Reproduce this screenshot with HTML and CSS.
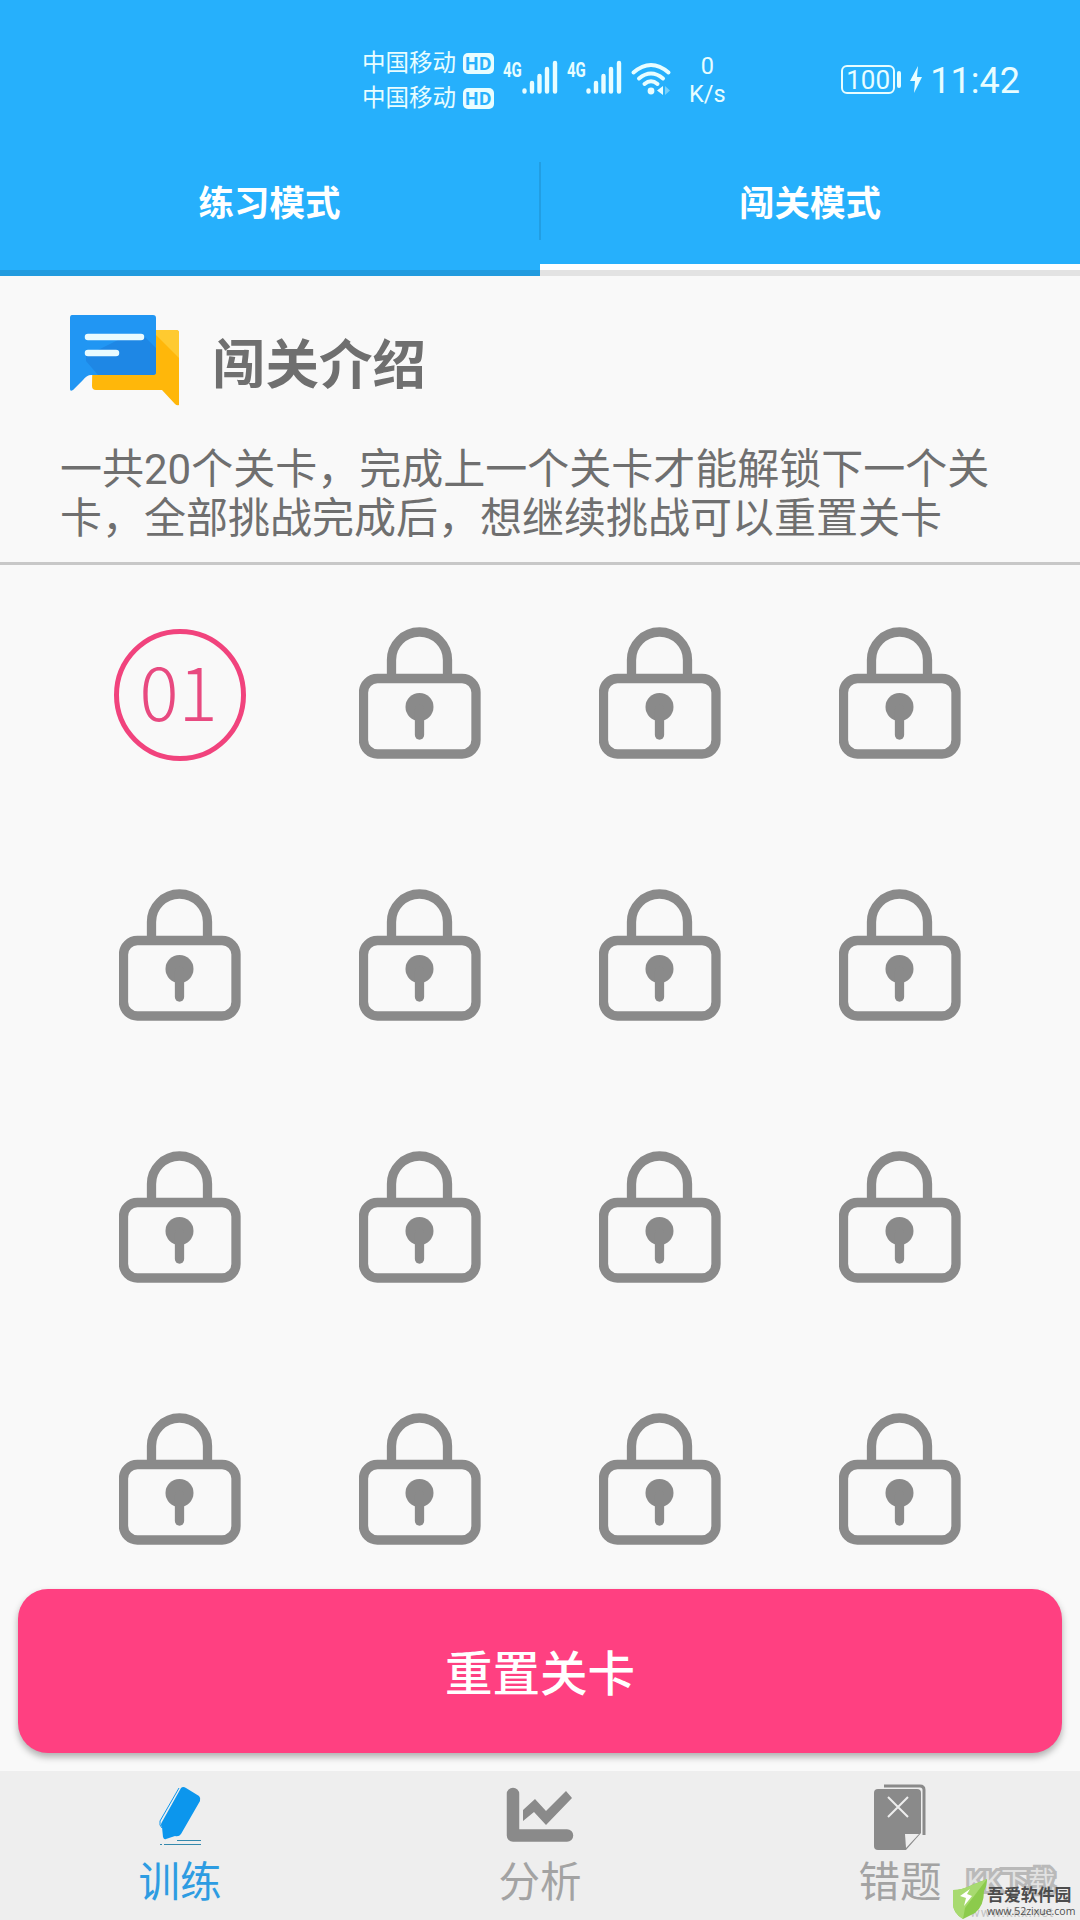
FILE: index.html
```
<!DOCTYPE html>
<html lang="zh-CN">
<head>
    <meta charset="UTF-8">
    <meta name="viewport" content="width=device-width, initial-scale=1.0">
    <title>闯关模式</title>
    <link rel="stylesheet" href="styles.css">
</head>
<body>
    <svg class="defs" width="0" height="0">
        <symbol id="lock" viewBox="0 0 122 132">
            <path d="M32.500 49V33a28 28 0 0 1 56 0V49" fill="none" stroke="#8a8a8a" stroke-width="9.300"/>
            <rect x="4.500" y="51.500" width="112.500" height="75.500" rx="14" fill="none" stroke="#8a8a8a" stroke-width="9.300"/>
            <circle cx="60.500" cy="80" r="14" fill="#8a8a8a"/>
            <path d="M60.500 82V108" stroke="#8a8a8a" stroke-width="9.300" stroke-linecap="round"/>
        </symbol>
        <symbol id="signal" viewBox="0 0 36 34">
            <path d="M2.500 30.500V31.500M10 23V31.500M17.500 16V31.500M25 9V31.500M33 3V31.500" stroke="#e8fdff" stroke-width="4.400" stroke-linecap="round"/>
        </symbol>
    </svg>

    <header class="header">
        <div class="status-bar">
            <div class="carriers">
                <div class="carrier">中国移动<span class="hd">HD</span></div>
                <div class="carrier">中国移动<span class="hd">HD</span></div>
            </div>
            <div class="signal first">
                <span>4G</span>
                <svg width="36" height="34"><use href="#signal"/></svg>
            </div>
            <div class="signal">
                <span>4G</span>
                <svg width="36" height="34"><use href="#signal"/></svg>
            </div>
            <svg class="wifi" width="40" height="34" viewBox="0 0 40 34">
                <g fill="none" stroke="#e8fdff" stroke-width="4" stroke-linecap="round">
                    <path d="M2.500 10.500Q20-4.500 37.500 10.500"/>
                    <path d="M8 16.500Q20 6.500 32 16.500"/>
                    <path d="M13.500 22Q20 16.500 26.500 22"/>
                </g>
                <circle cx="20" cy="29" r="3.400" fill="#e8fdff"/>
                <path d="M26 28.500L32 24V33Z" fill="#e8fdff"/>
                <path d="M34 24L39 28.500L34 33Z" fill="#77cffa"/>
            </svg>
            <div class="speed">0<br>K/s</div>
            <div class="battery">100</div>
            <div class="battery-tip"></div>
            <svg class="bolt" width="14" height="28" viewBox="0 0 14 28">
                <path d="M9 0L1 15H6L5 27L13 11H8Z" fill="#e8fdff"/>
            </svg>
            <div class="clock">11:42</div>
        </div>
        <nav class="tabs">
            <div class="tab">练习模式</div>
            <div class="tab-divider"></div>
            <div class="tab active">闯关模式</div>
        </nav>
    </header>

    <section class="intro">
        <div class="intro-title">
            <svg width="112" height="92" viewBox="0 0 112 92">
                <path d="M24 15H107Q110 15 110 18V90Q108 91 106 89L93 75H27Q23 75 23 71Z" fill="#ffb70a"/>
                <path d="M84 15H107Q110 15 110 18V43L84 17Z" fill="#ffca30"/>
                <path d="M3 0H84Q87 0 87 3V57Q87 60 84 60H22Q18 60 14 65L4 75Q1 77 1 74V3Q1 0 3 0Z" fill="#2196f3"/>
                <path d="M75 21L87 33V57Q87 60 84 60H29L17 46L17 41L49 25Z" fill="#1e87e5"/>
                <path d="M19 22H72M19 38H47" stroke="#e9fbff" stroke-width="6.500" stroke-linecap="round"/>
            </svg>
            <h1>闯关介绍</h1>
        </div>
        <p>一共20个关卡，完成上一个关卡才能解锁下一个关<br>卡，全部挑战完成后，想继续挑战可以重置关卡</p>
    </section>

    <main class="levels">
        <div class="level"><div class="number">01</div></div>
        <div class="level"><svg class="lock"><use href="#lock"/></svg></div>
        <div class="level"><svg class="lock"><use href="#lock"/></svg></div>
        <div class="level"><svg class="lock"><use href="#lock"/></svg></div>
        <div class="level"><svg class="lock"><use href="#lock"/></svg></div>
        <div class="level"><svg class="lock"><use href="#lock"/></svg></div>
        <div class="level"><svg class="lock"><use href="#lock"/></svg></div>
        <div class="level"><svg class="lock"><use href="#lock"/></svg></div>
        <div class="level"><svg class="lock"><use href="#lock"/></svg></div>
        <div class="level"><svg class="lock"><use href="#lock"/></svg></div>
        <div class="level"><svg class="lock"><use href="#lock"/></svg></div>
        <div class="level"><svg class="lock"><use href="#lock"/></svg></div>
        <div class="level"><svg class="lock"><use href="#lock"/></svg></div>
        <div class="level"><svg class="lock"><use href="#lock"/></svg></div>
        <div class="level"><svg class="lock"><use href="#lock"/></svg></div>
        <div class="level"><svg class="lock"><use href="#lock"/></svg></div>
    </main>

    <button class="reset-btn">重置关卡</button>

    <footer class="bottom-nav">
        <div class="nav-item active">
            <svg width="72" height="72" viewBox="0 0 72 72">
                <path d="M37 17Q39 15 42 17L55 25Q57 27 56 30L37 63Q35 66 31 65L22 68Q20 69 19 66L18 56Q16 54 18 51Z" fill="#0c96ed"/>
                <path d="M35 17L16 50V54L18 57" fill="none" stroke="#0c96ed" stroke-width="1"/>
                <path d="M33 69.500H57M20 73.500H57M16 73.500H18" stroke="#3489ad" stroke-width="1.200"/>
            </svg>
            <span>训练</span>
        </div>
        <div class="nav-item">
            <svg width="72" height="72" viewBox="0 0 72 72">
                <path d="M9 23V64.500H63" fill="none" stroke="#8a8a8a" stroke-width="12.500" stroke-linecap="round" stroke-linejoin="round"/>
                <path d="M19 39L31 28L42 40L62 20L68 27L42 54L30 41L19 50Z" fill="#8a8a8a"/>
            </svg>
            <span>分析</span>
        </div>
        <div class="nav-item">
            <svg width="72" height="72" viewBox="-6 -1 72 72">
                <path d="M14 14H50Q54 14 54 18V63" fill="none" stroke="#8a8a8a" stroke-width="3"/>
                <path d="M8 17H47Q51 17 51 21V61L36 78H8Q4 78 4 74V21Q4 17 8 17Z" fill="#8a8a8a"/>
                <path d="M35 62H49L36 76Z" fill="#eee"/>
                <path d="M18 25L38 45M38 25L18 45" stroke="#eee" stroke-width="2"/>
            </svg>
            <span>错题</span>
        </div>
    </footer>

    <div class="watermark">
        <div class="mark-back">KK下载</div>
        <div class="mark-back-url">www.kkx.net</div>
        <svg class="mark-leaf" width="36" height="42" viewBox="0 0 36 42">
            <path d="M1 11Q11 11 20 6Q28 3 35 0Q35 7 32 12Q32 27 23 34L11 40Q1 34 1 25Z" fill="#8ccb4c"/>
            <path d="M35 0L13 29L11 40Q1 34 1 25V11Q10 11 20 6Z" fill="#a8da70"/>
            <path d="M18 10L8 17L14 19L12 27L20 17L15 15Z" fill="#fff"/>
        </svg>
        <div class="mark-name">吾爱软件园</div>
        <div class="mark-url">www.52zixue.com</div>
    </div>
</body>
</html>
```
FILE: styles.css
```
* {
    margin: 0;
    padding: 0;
    box-sizing: border-box;
}

body {
    position: relative;
    width: 1080px;
    height: 1920px;
    overflow: hidden;
    display: flex;
    flex-direction: column;
    font-family: Roboto, "Noto Sans CJK SC", sans-serif;
    background: #f9f9f9;
    color: #6f6f6f;
}

svg {
    display: block;
    flex-shrink: 0;
    overflow: visible;
}

.defs {
    position: absolute;
}

/* header */
.header {
    height: 276px;
    background: #26b0fc;
    flex-shrink: 0;
}

.status-bar {
    height: 162px;
    padding: 45px 60px 0 362px;
    display: flex;
    align-items: flex-start;
    color: #e8fdff;
}

.carriers {
    width: 133px;
    padding-top: 1px;
}

.carrier {
    height: 35px;
    display: flex;
    align-items: center;
    gap: 7px;
    font-size: 23.500px;
    line-height: 35px;
    white-space: nowrap;
}

.hd {
    width: 31px;
    height: 21px;
    border-radius: 5px;
    background: #e8fdff;
    color: #26b0fc;
    font-size: 19px;
    font-weight: 700;
    line-height: 21px;
    text-align: center;
    letter-spacing: 0.500px;
}

.signal {
    width: 65px;
    padding-top: 15px;
    display: flex;
}

.signal.first {
    margin-left: 9px;
}

.signal span {
    width: 19px;
    font-size: 20px;
    font-weight: 700;
    line-height: 21px;
    transform: scaleX(0.750);
    transform-origin: left;
}

.wifi {
    margin: 17px 0 0 -1px;
}

.speed {
    width: 60px;
    margin: 7px 0 0 7px;
    font-size: 23.500px;
    line-height: 28px;
    text-align: center;
}

.battery {
    width: 55px;
    height: 29px;
    margin: 20px 0 0 104px;
    border: 2px solid #e8fdff;
    border-radius: 6px;
    font-size: 26px;
    line-height: 26px;
    text-align: center;
}

.battery-tip {
    width: 4px;
    height: 17px;
    margin: 26px 8px 0 2px;
    border-radius: 2px;
    background: #e8fdff;
}

.bolt {
    margin-top: 21px;
}

.clock {
    margin: 15px 0 0 7px;
    font-size: 36px;
    line-height: 42px;
}

.tabs {
    height: 114px;
    display: flex;
    border-bottom: 6px solid #229bdf;
}

.tab {
    width: 539px;
    height: 108px;
    padding-top: 18px;
    color: #fff;
    font-size: 35.500px;
    font-weight: 700;
    line-height: 48px;
    text-align: center;
}

.tab.active {
    width: 540px;
    height: 114px;
    border-bottom: 6px solid #e3e3e3;
    box-shadow: inset 0 -6px #fff;
}

.tab-divider {
    width: 2px;
    height: 78px;
    margin-right: -1px;
    background: #229ee2;
}

/* intro */
.intro {
    height: 289px;
    padding: 39px 60px 0;
    border-bottom: 3px solid #c8c8c8;
    flex-shrink: 0;
}

.intro-title {
    height: 102px;
    padding-left: 9px;
    display: flex;
    gap: 31px;
}

.intro-title h1 {
    margin-top: 11px;
    font-size: 53.500px;
    font-weight: 700;
    line-height: 80px;
}

.intro p {
    margin-top: 28px;
    font-size: 42px;
    line-height: 49px;
    white-space: nowrap;
}

/* levels */
.levels {
    height: 1024px;
    padding: 0 60px;
    display: grid;
    grid-template-columns: repeat(4, 240px);
    grid-auto-rows: 262px;
    overflow: hidden;
    flex-shrink: 0;
}

.level {
    padding-top: 62px;
    display: flex;
    justify-content: center;
    align-items: flex-start;
}

.lock {
    width: 122px;
    height: 132px;
}

.number {
    width: 132px;
    height: 132px;
    margin-top: 2px;
    padding-right: 3px;
    border: 5px solid #f1437d;
    border-radius: 50%;
    color: #e84a80;
    font-family: "Noto Sans CJK SC", sans-serif;
    font-size: 73px;
    font-weight: 300;
    line-height: 111px;
    text-align: center;
}

.reset-btn {
    width: 1044px;
    height: 164px;
    margin: 0 18px;
    padding-bottom: 2px;
    border: none;
    border-radius: 30px;
    background: #ff4081;
    box-shadow: 0 4px 7px rgba(0, 0, 0, 0.3);
    color: #fff;
    font-family: Roboto, "Noto Sans CJK SC", sans-serif;
    font-size: 47.500px;
    font-weight: 500;
    flex-shrink: 0;
}

/* bottom navigation */
.bottom-nav {
    height: 149px;
    margin-top: 18px;
    display: flex;
    justify-content: space-between;
    background: #eee;
}

.nav-item {
    width: 360px;
    display: flex;
    flex-direction: column;
    align-items: center;
    color: #a3a3a3;
    font-size: 41.500px;
}

.nav-item span {
    margin-top: 7px;
    line-height: 66px;
}

.nav-item.active {
    color: #2d9ce2;
}

/* watermark over the bottom right corner */
.watermark {
    position: absolute;
    right: 0;
    bottom: 0;
    width: 128px;
    height: 56px;
    white-space: nowrap;
}

.watermark > * {
    position: absolute;
}

.mark-back {
    left: 15px;
    top: 2px;
    color: #e2e2e2;
    font-size: 27px;
    line-height: 32px;
    -webkit-text-stroke: 6px #b9b9b9;
    paint-order: stroke fill;
}

.mark-back-url {
    left: 18px;
    top: 42px;
    color: #c4c4c4;
    font-size: 13px;
    line-height: 14px;
    letter-spacing: 1px;
}

.mark-leaf {
    left: 0;
    top: 15px;
}

.mark-name {
    left: 35px;
    top: 19px;
    color: #4c4c4c;
    font-size: 16.900px;
    font-weight: 700;
    line-height: 24px;
}

.mark-url {
    left: 35px;
    top: 40px;
    color: #505050;
    font-family: "Open Sans", sans-serif;
    font-size: 10.500px;
    line-height: 14px;
}
```
